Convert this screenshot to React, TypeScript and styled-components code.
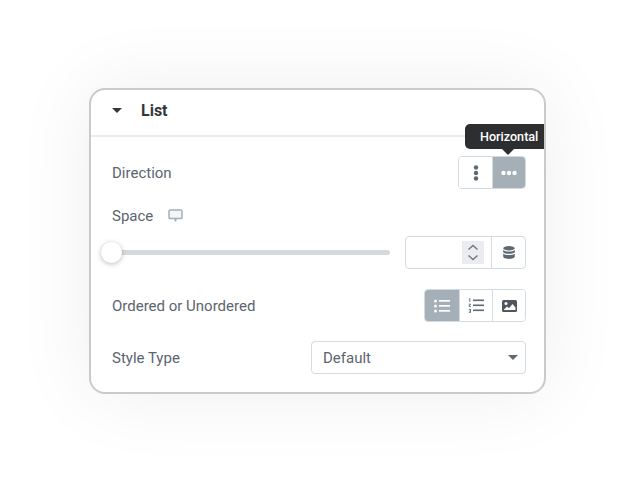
import React from "react";
import styled, { createGlobalStyle } from "styled-components";

const Global = createGlobalStyle`
  html, body { margin: 0; padding: 0; background: #fff; }
  * { box-sizing: border-box; }
`;

const Page = styled.div`
  width: 634px;
  height: 482px;
  padding: 88px 0 0 89px;
  overflow: hidden;
  background: #fff;
  font-family: Roboto, "Liberation Sans", sans-serif;
`;

const Card = styled.section`
  position: relative;
  width: 457px;
  height: 306px;
  background: #fff;
  border: 2px solid #c9cacb;
  border-radius: 16px;
  box-shadow: 0 0 80px rgba(0, 0, 0, 0.07);
  overflow: hidden;
`;

const Header = styled.header`
  display: flex;
  align-items: center;
  height: 47px;
  padding: 0 0 4px 21px;
  border-bottom: 2px solid #e9ebee;
`;

const Caret = styled.span`
  width: 0;
  height: 0;
  margin-right: 19px;
  border-left: 5px solid transparent;
  border-right: 5px solid transparent;
  border-top: 5px solid #33373c;
`;

const Title = styled.h2`
  margin: 0;
  font-size: 16px;
  font-weight: 700;
  color: #32373c;
`;

const Body = styled.div`
  padding: 19px 18px 0 21px;
`;

const Row = styled.div<{ $h: number; $mb: number }>`
  display: flex;
  align-items: center;
  justify-content: space-between;
  height: ${(p) => p.$h}px;
  margin-bottom: ${(p) => p.$mb}px;
`;

const LabelWrap = styled.div`
  display: flex;
  align-items: center;
  gap: 15px;
`;

const Label = styled.span`
  font-size: 15px;
  color: #5c646e;
`;

const Group = styled.div`
  display: flex;
  height: 33px;
  border: 1px solid #d5dadf;
  border-radius: 4px;
  overflow: hidden;
`;

const GroupBtn = styled.button<{ $active?: boolean; $w: number }>`
  display: flex;
  align-items: center;
  justify-content: center;
  width: ${(p) => p.$w}px;
  padding: 0;
  background: ${(p) => (p.$active ? "#a4afb7" : "#fff")};
  color: ${(p) => (p.$active ? "#fff" : "#5f6972")};
  border: 0;
  border-left: 1px solid #d5dadf;
  &:first-child { border-left: 0; }
`;

const Tooltip = styled.div`
  position: absolute;
  left: 374px;
  top: 34px;
  width: 90px;
  height: 25px;
  padding-left: 15px;
  background: #2d2e30;
  border-radius: 5px 0 0 5px;
  color: #fff;
  font-size: 12.6px;
  font-weight: 500;
  line-height: 25px;
  &::after {
    content: "";
    position: absolute;
    left: 37px;
    top: 25px;
    border-left: 6px solid transparent;
    border-right: 6px solid transparent;
    border-top: 6px solid #2d2e30;
  }
`;

const SliderRow = styled.div`
  display: flex;
  align-items: center;
  justify-content: space-between;
  height: 33px;
  margin-bottom: 20px;
`;

const Track = styled.div`
  position: relative;
  width: 278px;
  height: 5px;
  background: #d5dadf;
  border-radius: 3px;
`;

const Thumb = styled.span`
  position: absolute;
  left: -11px;
  top: -8px;
  width: 21px;
  height: 21px;
  background: #fff;
  border-radius: 50%;
  box-shadow: 0 1px 5px rgba(0, 0, 0, 0.28);
`;

const NumberBox = styled.div`
  display: flex;
  width: 121px;
  height: 33px;
  border: 1px solid #d5dadf;
  border-radius: 4px;
`;

const NumberInput = styled.div`
  display: flex;
  align-items: center;
  justify-content: flex-end;
  flex: 1;
  padding-right: 7px;
  border-right: 1px solid #d5dadf;
`;

const Spinner = styled.div`
  display: flex;
  align-items: center;
  justify-content: center;
  width: 22px;
  height: 23px;
  background: #ececf0;
`;

const DbCell = styled.div`
  display: flex;
  align-items: center;
  justify-content: center;
  width: 33px;
`;

const Select = styled.div`
  display: flex;
  align-items: center;
  justify-content: space-between;
  width: 215px;
  height: 33px;
  padding: 0 7px 0 11px;
  border: 1px solid #d5dadf;
  border-radius: 4px;
  font-size: 15px;
  color: #5c646e;
`;

const SelectCaret = styled.span`
  width: 0;
  height: 0;
  border-left: 5.5px solid transparent;
  border-right: 5.5px solid transparent;
  border-top: 5.5px solid #5f6972;
`;

const Dots = ({ vertical }: { vertical?: boolean }) => (
  <svg width="16" height="16" viewBox="0 0 16 16" fill="currentColor">
    {[2.5, 8, 13.5].map((v) =>
      vertical ? <circle key={v} cx="8" cy={v} r="2.2" /> : <circle key={v} cx={v} cy="8" r="2.2" />
    )}
  </svg>
);

const Monitor = () => (
  <svg width="15" height="13" viewBox="0 0 15 13" fill="none" stroke="#a4afb7" strokeWidth="1.5">
    <rect x="1" y="1" width="13" height="8.6" rx="1.2" fill="#f4f5f6" />
    <path d="M7.5 10v2.5" strokeWidth="2" />
  </svg>
);

const Chevrons = () => (
  <svg width="14" height="19" viewBox="0 0 14 19" fill="none" stroke="#6d7882" strokeWidth="1.4">
    <path d="M2.5 6.5 7 2.5l4.5 4" />
    <path d="M2.5 12.5 7 16.5l4.5-4" />
  </svg>
);

const Database = () => (
  <svg width="12" height="13" viewBox="0 0 12 13" fill="#5f6972">
    <ellipse cx="6" cy="2.2" rx="5.8" ry="2.2" />
    <path d="M.2 3.8C1 5.2 3.4 5.5 6 5.5s5-.3 5.8-1.7v1.9C11.8 7 9 7.8 6 7.8S.2 7 .2 5.7z" />
    <path d="M.2 7.4C1 8.7 3.4 9 6 9s5-.3 5.8-1.6v3.2C11.8 12 9 13 6 13S.2 12 .2 10.6z" />
  </svg>
);

const Bullets = () => (
  <svg width="16" height="14" viewBox="0 0 16 14" fill="currentColor">
    {[2, 7, 12].map((y) => (
      <g key={y}>
        <circle cx="1.5" cy={y} r="1.5" />
        <rect x="5" y={y - 1} width="11" height="1.7" />
      </g>
    ))}
  </svg>
);

const Numbered = () => (
  <svg width="16" height="15" viewBox="0 0 16 15" fill="currentColor">
    <path d="M1 .5h1.3V4H1.4V1.4H.8zM.7 5.8h2.2v.8L1.7 8h1.3v.8H.6V8l1.300-1.500H.7zM.7 11H3v3.800H.7V14h1.400v-.6H1.200v-.7h.9v-.9H.7z" />
    {[2, 7, 12].map((y) => (
      <rect key={y} x="5" y={y - 0.5} width="11" height="1.6" />
    ))}
  </svg>
);

const ImageIcon = () => (
  <svg width="15" height="12" viewBox="0 0 15 12">
    <rect width="15" height="12" rx="1.5" fill="#4f565e" />
    <circle cx="4" cy="3.6" r="1.5" fill="#fff" />
    <path d="M1.5 10 5 6.500 7 8.300 10.500 4 13.500 7.500V10z" fill="#fff" />
  </svg>
);

export default function App() {
  return (
    <Page>
      <Global />
      <Card>
        <Header>
          <Caret />
          <Title>List</Title>
        </Header>
        <Body>
          <Row $h={33} $mb={10}>
            <Label>Direction</Label>
            <Group>
              <GroupBtn $w={33}>
                <Dots vertical />
              </GroupBtn>
              <GroupBtn $w={33} $active>
                <Dots />
              </GroupBtn>
            </Group>
          </Row>
          <Row $h={33} $mb={4}>
            <LabelWrap>
              <Label>Space</Label>
              <Monitor />
            </LabelWrap>
          </Row>
          <SliderRow>
            <Track>
              <Thumb />
            </Track>
            <NumberBox>
              <NumberInput>
                <Spinner>
                  <Chevrons />
                </Spinner>
              </NumberInput>
              <DbCell>
                <Database />
              </DbCell>
            </NumberBox>
          </SliderRow>
          <Row $h={33} $mb={19}>
            <Label>Ordered or Unordered</Label>
            <Group>
              <GroupBtn $w={34} $active>
                <Bullets />
              </GroupBtn>
              <GroupBtn $w={33}>
                <Numbered />
              </GroupBtn>
              <GroupBtn $w={33}>
                <ImageIcon />
              </GroupBtn>
            </Group>
          </Row>
          <Row $h={33} $mb={0}>
            <Label>Style Type</Label>
            <Select>
              Default
              <SelectCaret />
            </Select>
          </Row>
        </Body>
        <Tooltip>Horizontal</Tooltip>
      </Card>
    </Page>
  );
}
